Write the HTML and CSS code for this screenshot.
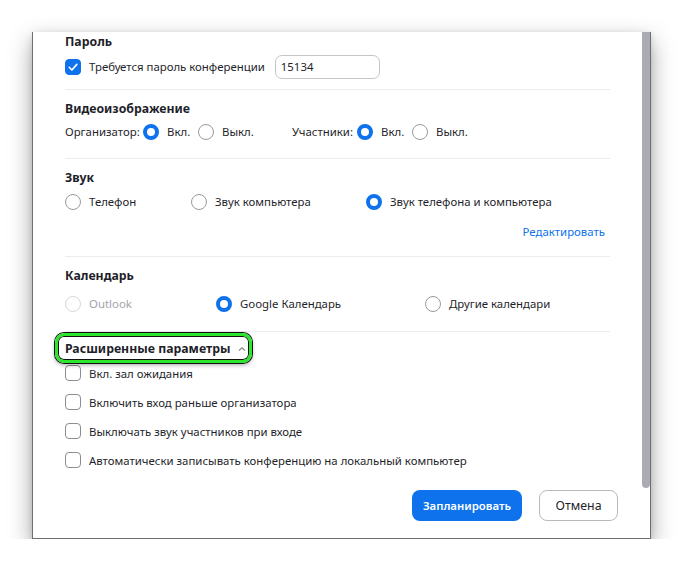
FILE: index.html
```html
<!DOCTYPE html>
<html lang="ru">
<head>
    <meta charset="UTF-8">
    <meta name="viewport" content="width=device-width, initial-scale=1.0">
    <title>Запланировать конференцию</title>
    <link rel="stylesheet" href="styles.css">
</head>
<body>
    <div class="window">
        <div class="content">
            <section class="group group-pass">
                <h2 class="group-title">Пароль</h2>
                <div class="row row-pass">
                    <div class="option">
                        <span class="box on">
                            <svg width="16" height="16" viewBox="0 0 16 16"><polyline points="4.2,8.3 6.9,11 11.8,5.4" fill="none" stroke="#fff" stroke-width="1.6" stroke-linecap="round" stroke-linejoin="round"/></svg>
                        </span>
                        <span>Требуется пароль конференции</span>
                    </div>
                    <input class="pass-input" type="text" value="15134">
                </div>
            </section>

            <section class="group group-video">
                <h2 class="group-title">Видеоизображение</h2>
                <div class="row row-video">
                    <span>Организатор:</span>
                    <div class="option"><span class="radio on"></span><span>Вкл.</span></div>
                    <div class="option"><span class="radio"></span><span>Выкл.</span></div>
                    <span>Участники:</span>
                    <div class="option"><span class="radio on"></span><span>Вкл.</span></div>
                    <div class="option"><span class="radio"></span><span>Выкл.</span></div>
                </div>
            </section>

            <section class="group group-audio">
                <h2 class="group-title">Звук</h2>
                <div class="row row-audio">
                    <div class="option"><span class="radio"></span><span>Телефон</span></div>
                    <div class="option"><span class="radio"></span><span>Звук компьютера</span></div>
                    <div class="option"><span class="radio on"></span><span>Звук телефона и компьютера</span></div>
                </div>
                <div class="edit-row"><a class="edit-link" href="#">Редактировать</a></div>
            </section>

            <section class="group group-calendar">
                <h2 class="group-title">Календарь</h2>
                <div class="row row-calendar">
                    <div class="option disabled"><span class="radio"></span><span>Outlook</span></div>
                    <div class="option"><span class="radio on"></span><span>Google Календарь</span></div>
                    <div class="option"><span class="radio"></span><span>Другие календари</span></div>
                </div>
            </section>

            <div class="advanced">
                <div class="advanced-head">
                    <span>Расширенные параметры</span>
                    <svg class="caret" width="8" height="6" viewBox="0 0 8 6"><polyline points="1,4.6 4,1.8 7,4.6" fill="none" stroke="#8a8a8a" stroke-width="1.3"/></svg>
                </div>
                <div class="checks">
                    <div class="option"><span class="box"></span><span>Вкл. зал ожидания</span></div>
                    <div class="option"><span class="box"></span><span>Включить вход раньше организатора</span></div>
                    <div class="option"><span class="box"></span><span>Выключать звук участников при входе</span></div>
                    <div class="option"><span class="box"></span><span>Автоматически записывать конференцию на локальный компьютер</span></div>
                </div>
            </div>

            <div class="footer">
                <button class="btn btn-primary" type="button">Запланировать</button>
                <button class="btn btn-cancel" type="button">Отмена</button>
            </div>
        </div>
        <div class="scrollbar"><div class="thumb"></div></div>
    </div>
</body>
</html>
```

FILE: styles.css
```css
body {
    margin: 0;
    background-color: #fff;
    font-family: "Noto Sans", "Open Sans", sans-serif;
    font-size: 11.4px;
    color: #1f1f2b;
}

.window {
    margin: 32px 0 0 32px;
    width: 617px;
    height: 506px;
    display: flex;
    background-color: #fff;
    border: 1px solid #6e6e6e;
    border-top: none;
    box-shadow: 0 9px 22px rgba(0, 0, 0, 0.36), 0 2px 6px rgba(0, 0, 0, 0.12);
}

.content {
    flex: 1;
    padding: 0 32px;
}

.scrollbar {
    width: 8px;
}

.thumb {
    height: 456px;
    background-color: #ababb4;
    border-radius: 0 0 4px 4px;
}

/* sections */
.group {
    border-bottom: 1px solid #ececef;
}

.group-title {
    margin: 0;
    font-size: 12.3px;
    font-weight: 700;
    line-height: 20px;
}

.group-pass {
    padding-bottom: 10px;
}

.group-video {
    padding: 9px 0 15px;
}

.group-audio {
    padding: 9px 0 14px;
}

.group-calendar {
    padding: 9px 0 16px;
}

.row {
    display: grid;
    align-items: center;
    height: 23px;
}

.row-pass {
    display: flex;
    height: 25px;
    margin-top: 2px;
    gap: 10px;
}

.row-video {
    grid-template-columns: 78px 55px 94px 65px 55px auto;
    margin-top: 1px;
}

.row-video > span {
    white-space: nowrap;
}

.row-audio {
    grid-template-columns: 126px 175px auto;
    margin-top: 2px;
}

.row-calendar {
    grid-template-columns: 151px 209px auto;
    margin-top: 6px;
}

.option {
    display: flex;
    align-items: center;
    gap: 8px;
    white-space: nowrap;
}

.option.disabled {
    color: #a3a3ab;
}

.radio {
    width: 16px;
    height: 16px;
    box-sizing: border-box;
    border: 1px solid #9a9a9f;
    border-radius: 50%;
    flex: none;
}

.radio.on {
    border: 4.5px solid #0e72ed;
}

.disabled .radio {
    border-color: #d9d9dd;
}

.box {
    width: 16px;
    height: 16px;
    box-sizing: border-box;
    border: 1px solid #8c8c92;
    border-radius: 4px;
    flex: none;
}

.box svg {
    display: block;
    margin: -1px;
}

.box.on {
    background-color: #0e72ed;
    border-color: #0e72ed;
}

.pass-input {
    width: 105px;
    height: 24px;
    box-sizing: border-box;
    padding: 0 5px;
    border: 1px solid #c4c4ca;
    border-radius: 7px;
    font-family: inherit;
    font-size: 11.4px;
    color: #1f1f2b;
}

.edit-row {
    margin-top: 9px;
    height: 20px;
    line-height: 20px;
    text-align: right;
    padding-right: 5px;
}

.edit-link {
    color: #0e72ed;
    text-decoration: none;
}

/* advanced */
.advanced-head {
    position: relative;
    display: flex;
    align-items: center;
    gap: 8px;
    height: 22px;
    margin-top: 5px;
    font-size: 12.3px;
    font-weight: 700;
}

/* green highlight round the header */
.advanced-head::after {
    content: "";
    position: absolute;
    left: -10px;
    top: -4px;
    width: 197px;
    height: 30px;
    box-sizing: border-box;
    border: 3px solid #2ee52e;
    border-radius: 9px;
    box-shadow: 0 0 0 1px #111, inset 0 0 0 1px #111, 0 2px 4px rgba(0, 0, 0, 0.35);
}

.caret {
    margin-top: 2px;
}

.checks {
    display: flex;
    flex-direction: column;
    gap: 7px;
    margin-top: 3px;
}

.checks .option {
    height: 22px;
}

.footer {
    display: flex;
    justify-content: flex-end;
    gap: 17px;
    margin: 19px -8px 0 0;
}

.btn {
    height: 31px;
    border-radius: 8px;
    font-family: inherit;
    cursor: pointer;
}

.btn-primary {
    width: 110px;
    background-color: #0e72ed;
    color: #fff;
    border: none;
    font-size: 11.4px;
    font-weight: 600;
}

.btn-cancel {
    width: 79px;
    background-color: #fff;
    color: #1f1f2b;
    border: 1px solid #b9b9bf;
    font-size: 12.4px;
}
```
